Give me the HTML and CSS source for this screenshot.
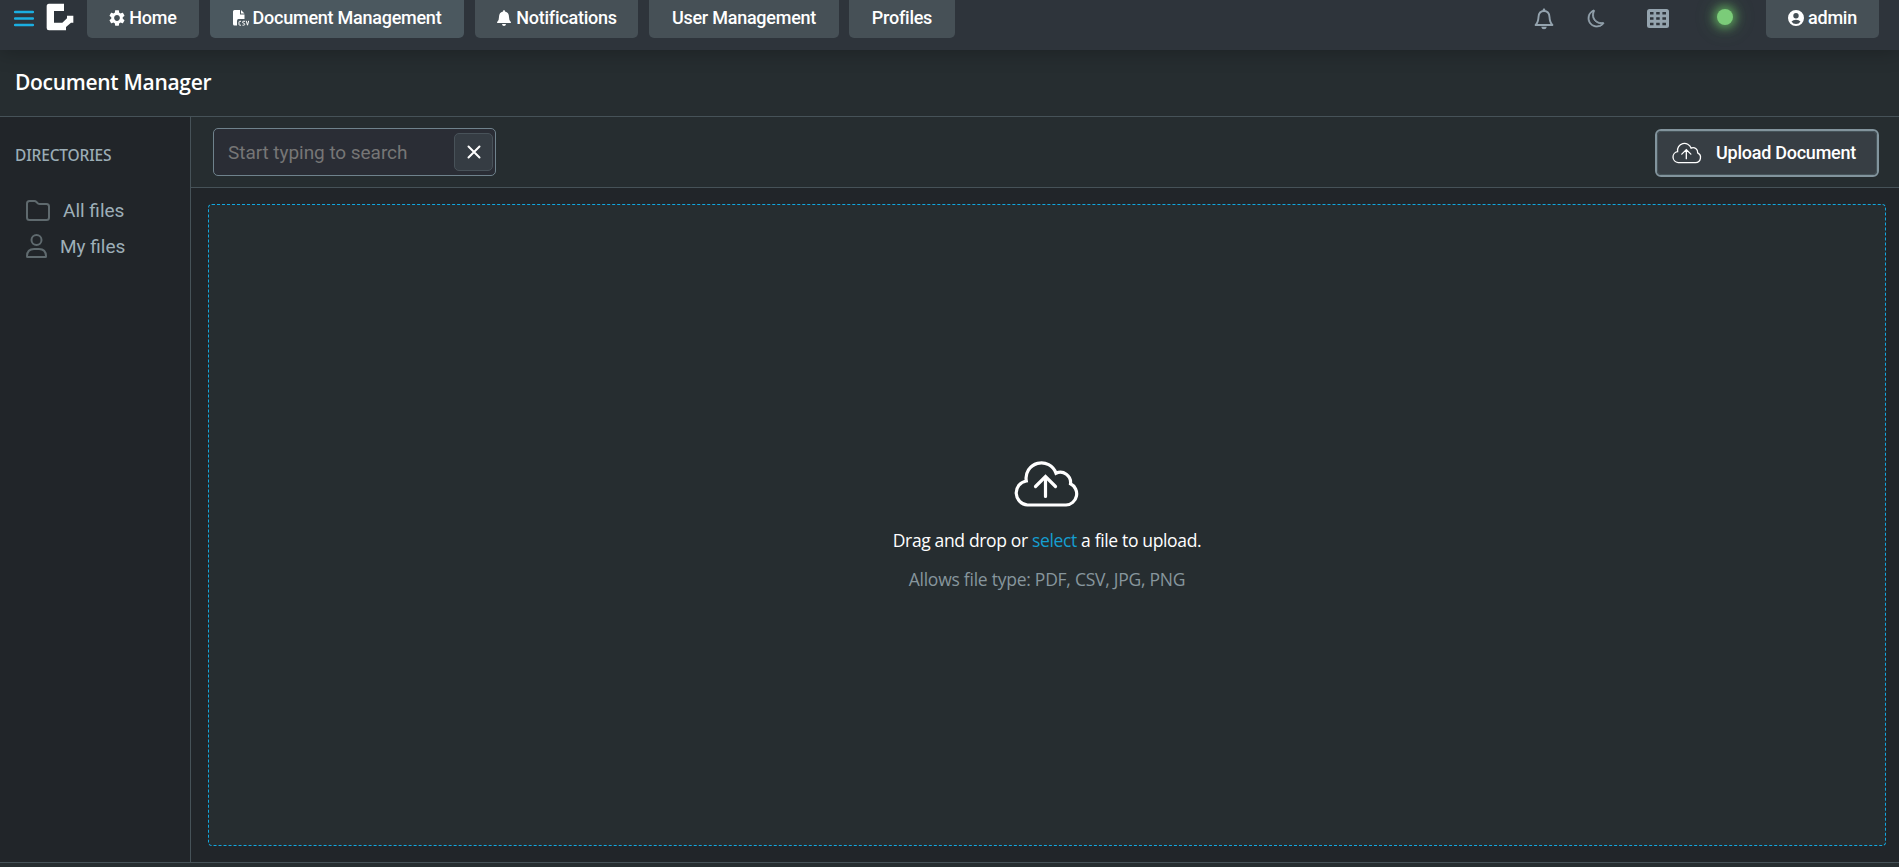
FILE: index.html
```
<!DOCTYPE html>
<html lang="en">
<head>
<meta charset="utf-8">
<title>Document Manager</title>
<link rel="stylesheet" href="styles.css">
</head>
<body>
<svg class="symbols" aria-hidden="true">
  <symbol id="cloud" viewBox="0 0 66 46">
    <path d="M13.500 44H52A11.200 11.200 0 0 0 56.500 22.800A10.300 10.300 0 0 0 42 12.200A15.400 15.400 0 0 0 12.300 20A12.100 12.100 0 0 0 13.500 44Z" />
    <path d="M31.500 35.500V15.500M21.500 25.500L31.500 15.500L41.500 25.500" stroke-linecap="round"/>
  </symbol>
</svg>
<header class="topbar">
  <svg class="menu" viewBox="0 0 20 18"><path d="M1 2h18M1 8.500h18M1 15h18"/></svg>
  <svg class="logo" viewBox="138 10 84 84"><path d="M147 12H192V34H162V69H187L201 56V48H220V69H213L198 82V92H147Q140 92 140 85V20Q140 12 147 12Z"/></svg>
  <nav class="nav">
    <a class="tab tab-home"><svg class="ic" viewBox="2 2 20 20"><path d="M19.140 12.940c.04-.3.06-.61.06-.94 0-.32-.02-.64-.07-.94l2.030-1.580c.18-.14.23-.41.12-.61l-1.920-3.320c-.12-.22-.37-.29-.59-.22l-2.390.96c-.5-.38-1.030-.7-1.620-.94l-.36-2.540c-.04-.24-.24-.41-.48-.41h-3.840c-.24 0-.43.17-.47.41l-.36 2.540c-.59.24-1.130.57-1.620.94l-2.390-.96c-.22-.08-.47 0-.59.22L2.740 8.870c-.12.21-.08.47.12.61l2.030 1.580c-.05.3-.09.63-.09.94s.02.64.07.94l-2.030 1.580c-.18.14-.23.41-.12.61l1.920 3.320c.12.22.37.29.59.22l2.390-.96c.5.38 1.030.7 1.620.94l.36 2.540c.05.24.24.41.48.41h3.840c.24 0 .44-.17.47-.41l.36-2.540c.59-.24 1.130-.56 1.620-.94l2.390.96c.22.08.47 0 .59-.22l1.920-3.320c.12-.22.07-.47-.12-.61l-2.010-1.580zM12 15.600c-1.980 0-3.600-1.620-3.600-3.600s1.620-3.600 3.600-3.600 3.600 1.620 3.600 3.600-1.620 3.600-3.600 3.600z"/></svg><span>Home</span></a>
    <a class="tab tab-docs active"><svg class="ic" viewBox="0 0 16 16"><path d="M1 0H7V4.500H11.500V9H5.500Q4 9 4 11V15.500H1.500Q0 15.500 0 14V1.500Q0 0 1.500 0ZM8 0L11.500 3.500H8Z"/><path class="csv" d="M8 11.300H6.800Q6 11.300 6 12.200V14.300Q6 15.200 6.800 15.200H8M12 11.300H10.300Q9.600 11.300 9.600 12.200T10.600 13.200Q11.800 13.400 11.700 14.400T10.500 15.200H9.500M13.200 10.800L14.500 15.200L15.700 10.800"/></svg><span>Document Management</span></a>
    <a class="tab tab-notes"><svg class="ic" viewBox="0 0 16 16"><path d="M8 0Q9 0 9 1.500Q13 2.300 13 7Q13 10 14.500 11.500Q15.500 12.500 14.500 13H1.500Q.5 12.500 1.500 11.500Q3 10 3 7Q3 2.300 7 1.500Q7 0 8 0ZM6 14H10Q9.800 16 8 16T6 14Z"/></svg><span>Notifications</span></a>
    <a class="tab tab-users"><span>User Management</span></a>
    <a class="tab tab-profiles"><span>Profiles</span></a>
  </nav>
  <div class="tools">
    <svg class="t-bell" viewBox="0 0 20 22"><path class="line" d="M10 3C6.200 3 4.700 5.800 4.500 9C4.300 13 3.700 15 1.600 17H18.400C16.300 15 15.700 13 15.500 9C15.300 5.800 13.800 3 10 3Z"/><path d="M8.500 3Q8.600.3 10 .3T11.500 3ZM7.200 18.700H12.800Q12.400 21.300 10 21.300T7.200 18.700Z"/></svg>
    <svg class="t-moon" viewBox="0 0 16 16"><path d="M6 .278a.768.768 0 0 1 .08.858 7.208 7.208 0 0 0-.878 3.460c0 4.021 3.278 7.277 7.318 7.277.527 0 1.040-.055 1.533-.16a.787.787 0 0 1 .81.316.733.733 0 0 1-.031.893A8.349 8.349 0 0 1 8.344 16C3.734 16 0 12.286 0 7.710 0 4.266 2.114 1.312 5.124.06A.752.752 0 0 1 6 .278zM4.858 1.311A7.269 7.269 0 0 0 1.025 7.710c0 4.020 3.279 7.276 7.319 7.276a7.316 7.316 0 0 0 5.205-2.162c-.337.042-.68.063-1.029.063-4.610 0-8.343-3.714-8.343-8.290 0-1.167.242-2.278.681-3.286z"/></svg>
    <svg class="t-grid" viewBox="0 0 22 19"><rect width="22" height="19" rx="2.500"/><path d="M3 3h3.500v2.500H3zM9.200 3h3.500v2.500H9.200zM15.400 3H19v2.500h-3.600zM3 8.300h3.500v2.500H3zM9.200 8.300h3.500v2.500H9.200zM15.400 8.300H19v2.500h-3.600zM3 13.700h3.500v2.500H3zM9.200 13.700h3.500v2.500H9.200zM15.400 13.700H19v2.500h-3.600z"/></svg>
    <span class="status"></span>
    <a class="tab tab-admin"><svg class="ic" viewBox="0 0 16 16"><path fill-rule="evenodd" d="M8 0A8 8 0 1 1 8 16A8 8 0 0 1 8 0ZM8 3A2.700 2.700 0 1 0 8 8.400A2.700 2.700 0 1 0 8 3ZM3.500 11.500Q5 14 8 14T12.500 11.500Q11 9.800 8 9.800T3.500 11.500Z"/></svg><span>admin</span></a>
  </div>
</header>
<div class="titlebar"><h1>Document Manager</h1></div>
<main class="main">
  <aside class="side">
    <h2>DIRECTORIES</h2>
    <a class="dir dir-all"><svg viewBox="0 0 24 21"><path d="M3.500 1H8.500Q9.500 1 10.200 1.700L12 3.500Q12.700 4 13.700 4H20.500Q23 4 23 6.500V17.500Q23 20 20.500 20H3.500Q1 20 1 17.500V3.500Q1 1 3.500 1Z"/></svg><span>All files</span></a>
    <a class="dir dir-my"><svg viewBox="0 0 21 24"><circle cx="10.500" cy="6" r="5"/><path d="M1 22.500C1 17.500 4 15 8 15H13C17 15 20 17.500 20 22.500Q20 23 19.500 23H1.500Q1 23 1 22.500Z"/></svg><span>My files</span></a>
  </aside>
  <section class="content">
    <div class="toolbar">
      <div class="search"><span>Start typing to search</span><button class="clear"><svg viewBox="0 0 14 14"><path d="M1.500 1.500l11 11M12.500 1.500l-11 11"/></svg></button></div>
      <button class="upload"><svg><use href="#cloud"/></svg><span>Upload Document</span></button>
    </div>
    <div class="zone-wrap">
      <div class="zone">
        <svg><use href="#cloud"/></svg>
        <p class="drag">Drag and drop or <a>select</a> a file to upload.</p>
        <p class="allow">Allows file type: PDF, CSV, JPG, PNG</p>
      </div>
    </div>
  </section>
</main>
<footer class="foot"></footer>
</body>
</html>
```
FILE: styles.css
```
* { box-sizing: border-box; }
body {
  margin: 0; height: 867px; overflow: hidden; display: flex; flex-direction: column;
  background: #212529; color: #fff; font-family: Roboto, "Liberation Sans", sans-serif;
}
svg { display: block; flex: none; }
h1, h2, p { margin: 0; }
span, p, h1, h2 { white-space: nowrap; }
.symbols { position: absolute; width: 0; height: 0; }

.topbar { height: 50px; flex: none; display: flex; align-items: flex-start; padding: 0 20px 0 14px; background: #2e343b; box-shadow: 0 2px 20px rgba(0,0,0,.25); z-index: 1; }
.menu { width: 20px; height: 18px; margin: 10px 12px 0 0; fill: none; stroke: #1baee1; stroke-width: 2.3; stroke-linecap: round; }
.logo { width: 28px; height: 28px; margin-top: 3px; fill: #fff; }
.nav { display: flex; gap: 11px; margin-left: 13px; }
.tab { height: 38px; display: flex; align-items: center; justify-content: center; gap: 4px; padding-bottom: 3px; background: #465056; border-radius: 0 0 5px 5px; font-size: 18px; font-weight: 500; letter-spacing: -.25px; }
.tab span { margin-top: -1px; }
.tab.active { background: #4b585f; }
.ic { width: 16px; height: 16px; fill: #fff; }
.csv { fill: none; stroke: #fff; stroke-width: 1; }
.tab-home { width: 112px; }
.tab-docs { width: 254px; }
.tab-notes { width: 163px; }
.tab-users { width: 190px; }
.tab-profiles { width: 106px; margin-left: -1px; }
.tab-admin { width: 113px; }

.tools { display: flex; align-items: flex-start; margin-left: auto; fill: #94a3ae; }
.t-bell { width: 20px; height: 22px; margin: 8px 34px 0 0; }
.t-bell .line { fill: none; stroke: #94a3ae; stroke-width: 1.9; stroke-linejoin: round; }
.t-moon { width: 17px; height: 19px; margin: 9px 42px 0 0; stroke: #94a3ae; stroke-width: .7; overflow: visible; }
.t-grid { width: 22px; height: 19px; margin: 9px 48px 0 0; }
.t-grid path { fill: #2e343b; }
.status { width: 16px; height: 16px; margin: 9px 33px 0 0; border-radius: 50%; background: #7bcc79; box-shadow: 0 0 10px 3px rgba(103,190,98,.7), 0 0 20px 3px rgba(103,190,98,.3); }

.titlebar { height: 67px; flex: none; padding: 0 15px 3px; display: flex; align-items: center; background: #262d30; border-bottom: 1px solid #465258; }
.titlebar h1 { font: 600 21px/30px "Open Sans", "Noto Sans", sans-serif; letter-spacing: -.3px; }
.main { flex: 1; display: flex; min-height: 0; }
.side { width: 191px; border-right: 1px solid #465258; padding: 27px 15px; color: #9badb6; background: #212529; }
.side h2 { font: 500 15.500px/22px "Noto Sans", "Open Sans", sans-serif; letter-spacing: -.15px; margin-bottom: 26px; }
.dir { display: flex; align-items: center; height: 36px; padding-left: 11px; font-size: 19px; color: #9eafb8; }
.dir svg { fill: none; stroke: #5f6a6e; stroke-width: 2; }
.dir-all svg { width: 24px; height: 21px; margin-right: 13px; }
.dir-my svg { width: 21px; height: 24px; margin-right: 13px; }

.content { flex: 1; display: flex; flex-direction: column; }
.toolbar { height: 71px; flex: none; display: flex; justify-content: space-between; align-items: center; padding: 0 20px 0 22px; background: #262d30; border-bottom: 1px solid #465258; }
.search { width: 283px; height: 48px; display: flex; align-items: center; justify-content: space-between; padding: 0 2px 0 14px; border: 1px solid #6f828c; border-radius: 5px; background: #2a2d35; color: #767676; font-size: 19px; letter-spacing: -.05px; }
.clear { width: 39px; height: 38px; padding: 0; display: flex; align-items: center; justify-content: center; border: 1px solid #485259; border-radius: 5px; background: #353c43; }
.clear svg { width: 14px; height: 14px; stroke: #fff; stroke-width: 2; stroke-linecap: round; }
.upload { width: 224px; height: 48px; display: flex; align-items: center; gap: 14px; padding: 0 0 0 15px; margin-top: 2px; border: 2px solid #82949d; outline: 1px solid #46545a; outline-offset: -3px; border-radius: 6px; background: #373e44; color: #fff; font: 500 18px/24px Roboto, sans-serif; letter-spacing: -.25px; }
.upload svg { width: 30px; height: 22px; fill: none; stroke: #fff; stroke-width: 2.900; }
.zone-wrap { flex: 1; padding: 16px 13px 16px 17px; background: #212529; }
.zone { height: 100%; display: flex; flex-direction: column; align-items: center; border: 1px dashed #12a7df; border-radius: 4px; background: #262d30; padding-top: 256px; font: 400 17.5px/24px "Open Sans", "Noto Sans", sans-serif; letter-spacing: -.35px; }
.zone svg { width: 66px; height: 46px; fill: none; stroke: #fff; stroke-width: 3.200; }
.drag { margin-top: 21px; }
.drag a { color: #159fd1; }
.allow { margin-top: 15px; color: #87969d; letter-spacing: -.25px; }
.foot { height: 5px; flex: none; border-top: 1px solid #465258; background: #262d30; }
```
